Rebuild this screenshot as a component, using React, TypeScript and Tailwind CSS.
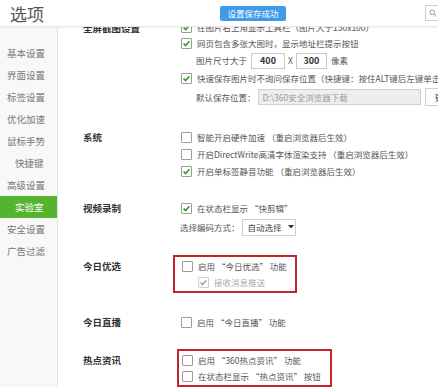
import type { ReactNode } from "react";

const FONT = "font-['Microsoft_YaHei','Noto_Sans_CJK_SC',sans-serif]";

function Box({ checked, disabled }: { checked?: boolean; disabled?: boolean }) {
  return (
    <span
      className={`flex h-[11px] w-[11px] shrink-0 items-center justify-center rounded-[1px] border bg-white ${
        disabled ? "border-[#cfcfcf]" : "border-[#9c9c9c]"
      }`}
    >
      {checked && (
        <svg width="9" height="9" viewBox="0 0 9 9">
          <path
            d="M1.6 4.6 L3.6 6.6 L7.4 2.2"
            fill="none"
            stroke={disabled ? "#a8a8a8" : "#2f9a22"}
            strokeWidth="1.5"
          />
        </svg>
      )}
    </span>
  );
}

function Check({
  children,
  checked,
  disabled,
  h = "h-[17px]",
}: {
  children: ReactNode;
  checked?: boolean;
  disabled?: boolean;
  h?: string;
}) {
  return (
    <div className={`flex items-center gap-[5px] whitespace-nowrap ${h}`}>
      <Box checked={checked} disabled={disabled} />
      <span className={disabled ? "text-[#a9a9a9]" : "text-[#555]"}>{children}</span>
    </div>
  );
}

function Section({ label, children, className = "" }: { label: string; children: ReactNode; className?: string }) {
  return (
    <div className={`flex ${className}`}>
      <div className="w-[98px] shrink-0 text-[9.5px] font-bold leading-[17px] text-[#333]">{label}</div>
      <div className="flex min-w-0 flex-col">{children}</div>
    </div>
  );
}

const menu = ["基本设置", "界面设置", "标签设置", "优化加速", "鼠标手势", "快捷键", "高级设置", "实验室", "安全设置", "广告过滤"];

export default function App() {
  return (
    <div className={`flex h-[387px] w-[438px] flex-col overflow-hidden bg-white ${FONT}`}>
      <div className="relative z-10 flex h-[27px] shrink-0 items-center border-b border-[#e6e6e6] bg-white shadow-[0_1px_2px_rgba(0,0,0,0.05)]">
        <div className="w-[220px] pl-[10px] text-[17px] leading-none text-[#555]">选项</div>
        <div className="flex h-[15px] w-[66px] items-center justify-center rounded-[2px] bg-[#3f9bea] text-[8.5px] text-white">
          设置保存成功
        </div>
        <div className="ml-auto flex h-[16px] w-[13px] items-center border-y border-l border-[#cfcfcf] pl-[3px]">
          <svg width="8" height="8" viewBox="0 0 8 8">
            <circle cx="3.3" cy="3.3" r="2.4" fill="none" stroke="#999" strokeWidth="1" />
            <path d="M5 5 L7.3 7.3" stroke="#999" strokeWidth="1" />
          </svg>
        </div>
      </div>

      <div className="flex min-h-0 flex-1">
        <div className="w-[58px] shrink-0 border-r border-[#e3e3e3] bg-[#f8f8f8] pt-[15px]">
          {menu.map((m) => (
            <div
              key={m}
              className={`flex h-[22px] items-center text-[9.5px] ${
                m === "实验室"
                  ? "bg-[#55b42f] pl-[15px] text-white"
                  : m === "快捷键"
                  ? "pl-[15px] text-[#777]"
                  : "pl-[7px] text-[#777]"
              }`}
            >
              {m}
            </div>
          ))}
        </div>

        <div className="min-w-0 flex-1 overflow-hidden pl-[25px] text-[8.5px] text-[#555]">
          <div className="-mt-[7px]">
            <Section label="全屏截图设置">
              <Check checked h="h-[15px]">在图片右上角显示工具栏（图片大于150x100）</Check>
              <Check checked h="h-[16px]">网页包含多张大图时，显示地址栏提示按钮</Check>
              <div className="flex h-[19px] items-center whitespace-nowrap pl-[15px]">
                <span>图片尺寸大于</span>
                <span className="ml-[4px] flex h-[16px] w-[34px] items-center justify-center border border-[#c9c9c9] text-[9px] font-bold text-[#333]">
                  400
                </span>
                <span className="mx-[3px]">X</span>
                <span className="flex h-[16px] w-[31px] items-center justify-center border border-[#c9c9c9] text-[9px] font-bold text-[#333]">
                  300
                </span>
                <span className="ml-[4px]">像素</span>
              </div>
              <Check checked h="h-[16px]">快速保存图片时不询问保存位置（快捷键：按住ALT键后左键单击图片）</Check>
              <div className="flex h-[22px] items-center whitespace-nowrap pl-[15px]">
                <span>默认保存位置：</span>
                <span className="ml-[2px] flex h-[16px] w-[163px] shrink-0 items-center border border-[#cfcfcf] bg-[#eeeeee] pl-[4px] text-[#999]">
                  D:\360安全浏览器下载
                </span>
                <span className="ml-[4px] flex h-[18px] w-[40px] shrink-0 items-center border border-[#cfcfcf] bg-white pl-[9px] text-[#333]">
                  更改
                </span>
              </div>
            </Section>

            <Section label="系统" className="mt-[21px]">
              <Check>智能开启硬件加速 （重启浏览器后生效）</Check>
              <Check>开启DirectWrite高清字体渲染支持 （重启浏览器后生效）</Check>
              <Check checked>开启单标签静音功能 （重启浏览器后生效）</Check>
            </Section>

            <Section label="视频录制" className="mt-[20px]">
              <Check checked>在状态栏显示 “快剪辑”</Check>
              <div className="flex h-[20px] items-center whitespace-nowrap">
                <span className="-ml-[1px]">选择编码方式：</span>
                <span className="ml-[2px] flex h-[17px] w-[54px] items-center border border-[#cfcfcf] bg-white pl-[5px] text-[#444]">
                  自动选择
                  <svg className="ml-[6px]" width="6" height="4" viewBox="0 0 6 4">
                    <path d="M0 0 L6 0 L3 3.5 Z" fill="#333" />
                  </svg>
                </span>
              </div>
            </Section>

            <div className="mt-[18px] flex">
              <div className="w-[98px] shrink-0 pt-[3px] text-[9.5px] font-bold leading-[17px] text-[#333]">今日优选</div>
              <div className="-ml-[8px] w-[124px] border-2 border-[#c0262a] py-[1px] pl-[7px]">
                <Check h="h-[16px]">启用 “今日优选” 功能</Check>
                <div className="pl-[16px]">
                  <Check checked disabled h="h-[16px]">接收消息推送</Check>
                </div>
              </div>
            </div>

            <Section label="今日直播" className="mt-[21px]">
              <Check h="h-[16px]">启用 “今日直播” 功能</Check>
            </Section>

            <div className="mt-[18px] flex">
              <div className="w-[98px] shrink-0 pt-[3px] text-[9.5px] font-bold leading-[17px] text-[#333]">热点资讯</div>
              <div className="-ml-[4px] w-[155px] border-2 border-[#c0262a] py-[1px] pl-[3px]">
                <Check h="h-[16px]">启用 “360热点资讯” 功能</Check>
                <Check h="h-[16px]">在状态栏显示 “热点资讯” 按钮</Check>
              </div>
            </div>
          </div>
        </div>
      </div>
    </div>
  );
}
